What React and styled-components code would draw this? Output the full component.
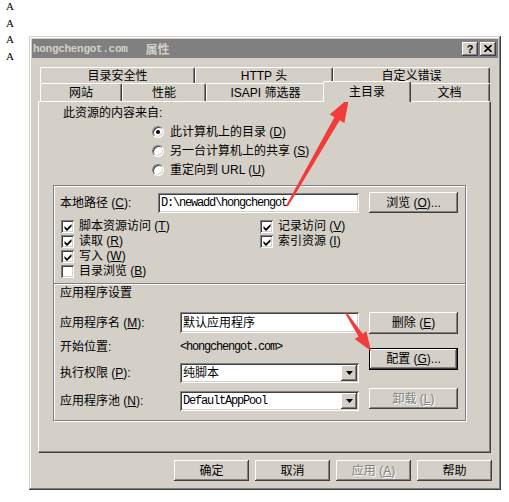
import React from 'react'
import styled, { createGlobalStyle } from 'styled-components'

const FACE = '#d4d0c8'
const raised = `box-shadow: inset -1px -1px #404040, inset 1px 1px #fff, inset -2px -2px #808080, inset 2px 2px ${FACE};`
const sunken = `box-shadow: inset 1px 1px #808080, inset -1px -1px #fff, inset 2px 2px #404040, inset -2px -2px ${FACE};`

const GlobalStyle = createGlobalStyle`
  html, body { margin: 0; padding: 0; background: #fff; }
  body {
    font-family: "Liberation Sans", "Noto Sans CJK SC", sans-serif;
    font-size: 12px;
    line-height: 16px;
    color: #000;
  }
  u { text-decoration: underline; text-underline-offset: 1px; }
`

// tail/tip arrow polygon, like the red markup arrows in the shot
function arrowPoints([x1, y1], [x2, y2], tw, nw, hl, hw) {
    const dx = x2 - x1, dy = y2 - y1
    const len = Math.hypot(dx, dy)
    const ux = dx / len, uy = dy / len
    const nx = -uy, ny = ux
    const bx = x2 - ux * hl, by = y2 - uy * hl
    const p = (x, y, k) => [x + nx * k, y + ny * k]
    const pts = [
        p(x1, y1, tw / 2), p(bx, by, nw / 2), p(bx, by, hw / 2), [x2, y2],
        p(bx, by, -hw / 2), p(bx, by, -nw / 2), p(x1, y1, -tw / 2),
    ]
    return pts.map(q => q.map(v => v.toFixed(1)).join(',')).join(' ')
}

const Check = () => (
    <svg width="8" height="8" viewBox="0 0 8 8">
        <path d="M0.5 3 L3 5.5 L7.5 1 L7.5 3.5 L3 8 L0.5 5.5Z" fill="#000" />
    </svg>
)

const DownArrow = () => (
    <svg width="7" height="4" viewBox="0 0 7 4">
        <polygon points="0,0 7,0 3.5,4" fill="#000" />
    </svg>
)

// mnemonic "(X)" kept in a latin face so the parens stay tight
const Key = ({ k }) => <KeyText>(<u>{k}</u>)</KeyText>

function App() {
    return (
        <Page>
            <GlobalStyle />
            <Letters>
                <div>A</div>
                <div>A</div>
                <div>A</div>
                <div>A</div>
            </Letters>
            <Window>
                <TitleBar>
                    <TitleText>
                        <TitleLatin>hongchengot.com</TitleLatin>
                        <TitleCjk>属性</TitleCjk>
                    </TitleText>
                    <CaptionButtons>
                        <CaptionButton>?</CaptionButton>
                        <CaptionButton>
                            <svg width="8" height="7" viewBox="0 0 8 7">
                                <path d="M0.5 0 L7.5 7 M7.5 0 L0.5 7" stroke="#000" strokeWidth="1.6" />
                            </svg>
                        </CaptionButton>
                    </CaptionButtons>
                </TitleBar>

                <Body>
                    <Tabs>
                        <TabRow $h={16}>
                            <Tab $w={155}>目录安全性</Tab>
                            <Tab $w={138}>HTTP 头</Tab>
                            <Tab $w={157}>自定义错误</Tab>
                        </TabRow>
                        <TabRow $h={18}>
                            <Tab $w={82}>网站</Tab>
                            <Tab $w={84}>性能</Tab>
                            <Tab $w={119}>ISAPI 筛选器</Tab>
                            <Tab $w={84} $active>主目录</Tab>
                            <Tab $w={81}>文档</Tab>
                        </TabRow>
                    </Tabs>

                    <Panel>
                        <SourceLabel>此资源的内容来自:</SourceLabel>
                        <RadioList>
                            <RadioRow><Radio $on /><span>此计算机上的目录 <Key k="D" /></span></RadioRow>
                            <RadioRow><Radio /><span>另一台计算机上的共享 <Key k="S" /></span></RadioRow>
                            <RadioRow><Radio /><span>重定向到 URL <Key k="U" /></span></RadioRow>
                        </RadioList>

                        <GroupBox>
                            <PathSection>
                                <PathRow>
                                    <Label $w={98}>本地路径 <Key k="C" />:</Label>
                                    <TextField $w={201} $h={20} $mono>D:\newadd\hongchengot</TextField>
                                    <Button $w={89} $h={21} $ml={10}><span>浏览 <Key k="O" />...</span></Button>
                                </PathRow>
                                <CheckColumns>
                                    <CheckColumn $w={199}>
                                        <CheckRow><CheckBox><Check /></CheckBox><span>脚本资源访问 <Key k="T" /></span></CheckRow>
                                        <CheckRow><CheckBox><Check /></CheckBox><span>读取 <Key k="R" /></span></CheckRow>
                                        <CheckRow><CheckBox><Check /></CheckBox><span>写入 <Key k="W" /></span></CheckRow>
                                        <CheckRow><CheckBox /><span>目录浏览 <Key k="B" /></span></CheckRow>
                                    </CheckColumn>
                                    <CheckColumn>
                                        <CheckRow><CheckBox><Check /></CheckBox><span>记录访问 <Key k="V" /></span></CheckRow>
                                        <CheckRow><CheckBox><Check /></CheckBox><span>索引资源 <Key k="I" /></span></CheckRow>
                                    </CheckColumn>
                                </CheckColumns>
                            </PathSection>
                            <Divider />
                            <AppSection>
                                <SectionTitle>应用程序设置</SectionTitle>
                                <AppGrid>
                                    <AppFields>
                                        <FieldRow $h={21}>
                                            <Label $w={120}>应用程序名 <Key k="M" />:</Label>
                                            <TextField $w={179} $h={21}>默认应用程序</TextField>
                                        </FieldRow>
                                        <FieldRow $h={16} $mt={6}>
                                            <Label $w={120}>开始位置:</Label>
                                            <Mono>&lt;hongchengot.com&gt;</Mono>
                                        </FieldRow>
                                        <FieldRow $h={20} $mt={8}>
                                            <Label $w={120}>执行权限 <Key k="P" />:</Label>
                                            <Select>
                                                <SelectValue>纯脚本</SelectValue>
                                                <DropButton><DownArrow /></DropButton>
                                            </Select>
                                        </FieldRow>
                                        <FieldRow $h={20} $mt={8}>
                                            <Label $w={120}>应用程序池 <Key k="N" />:</Label>
                                            <Select>
                                                <SelectValue $mono>DefaultAppPool</SelectValue>
                                                <DropButton><DownArrow /></DropButton>
                                            </Select>
                                        </FieldRow>
                                    </AppFields>
                                    <AppButtons>
                                        <Button $w={89} $h={22}><span>删除 <Key k="E" /></span></Button>
                                        <Button $w={89} $h={22} $mt={14} $default><span>配置 <Key k="G" />...</span></Button>
                                        <Button $w={89} $h={21} $mt={18} $disabled><span>卸载 <Key k="L" /></span></Button>
                                    </AppButtons>
                                </AppGrid>
                            </AppSection>
                        </GroupBox>
                    </Panel>

                    <ButtonBar>
                        <Button $w={75} $h={21}>确定</Button>
                        <Button $w={75} $h={21}>取消</Button>
                        <Button $w={75} $h={21} $disabled><span>应用 <Key k="A" /></span></Button>
                        <Button $w={75} $h={21}>帮助</Button>
                    </ButtonBar>
                </Body>
            </Window>

            <Overlay width="509" height="502" viewBox="0 0 509 502">
                <polygon points={arrowPoints([287, 206], [349, 98], 2, 6, 24, 17)} fill="#f23b3b" />
                <polygon points={arrowPoints([346, 313], [371, 351], 2, 5, 19, 14)} fill="#f23b3b" />
            </Overlay>
        </Page>
    )
}

export default App

const Page = styled.div`
    position: relative;
    width: 509px;
    height: 502px;
    display: flex;
    align-items: flex-start;
    overflow: hidden;
`

const Letters = styled.div`
    width: 29px;
    box-sizing: border-box;
    padding-left: 6px;
    margin-top: -2px;
    font-family: "Liberation Serif", serif;
    font-size: 11px;
    line-height: 16.7px;
`

const Window = styled.div`
    margin-top: 36px;
    width: 472px;
    height: 454px;
    box-sizing: border-box;
    padding: 3px;
    background: ${FACE};
    box-shadow: inset -1px -1px #404040, inset 1px 1px ${FACE}, inset -2px -2px #808080, inset 2px 2px #fff;
    display: flex;
    flex-direction: column;
`

const TitleBar = styled.div`
    height: 19px;
    background: #808080;
    display: flex;
    align-items: center;
    padding: 0 2px 0 1px;
    color: ${FACE};
    font-weight: 700;
`

const TitleText = styled.div`
    flex: 1;
    display: flex;
    align-items: center;
`

const TitleLatin = styled.span`
    font-family: "Liberation Mono", monospace;
    font-size: 11px;
    letter-spacing: -0.3px;
`

const TitleCjk = styled.span`
    margin-left: 18px;
    font-size: 12px;
    font-family: "Noto Sans CJK SC", sans-serif;
`

const CaptionButtons = styled.div`
    display: flex;
    gap: 2px;
`

const CaptionButton = styled.div`
    width: 16px;
    height: 14px;
    box-sizing: border-box;
    background: ${FACE};
    ${raised}
    display: flex;
    align-items: center;
    justify-content: center;
    color: #000;
    font-family: "Liberation Sans", sans-serif;
    font-size: 11px;
    font-weight: 700;
`

const KeyText = styled.span`
    font-family: "Liberation Sans", sans-serif;
`

const Body = styled.div`
    flex: 1;
    padding: 9px 7px 0 6px;
    display: flex;
    flex-direction: column;
`

const Tabs = styled.div`
    margin-left: 2px;
`

const TabRow = styled.div`
    display: flex;
    align-items: flex-end;
    height: ${p => p.$h}px;
`

const Tab = styled.div`
    width: ${p => (p.$active ? p.$w + 4 : p.$w)}px;
    height: ${p => (p.$active ? '21px' : '100%')};
    margin: ${p => (p.$active ? '0 -2px -1px' : '0')};
    position: ${p => (p.$active ? 'relative' : 'static')};
    z-index: ${p => (p.$active ? 1 : 'auto')};
    box-sizing: border-box;
    background: ${FACE};
    border-top: 1px solid #fff;
    border-left: 1px solid #fff;
    border-right: 1px solid #404040;
    border-top-left-radius: 2px;
    border-top-right-radius: 2px;
    box-shadow: inset -1px 0 #808080;
    display: flex;
    align-items: center;
    justify-content: center;
    padding-top: ${p => (p.$active ? 0 : 1)}px;
    white-space: nowrap;
`

const Panel = styled.div`
    height: 352px;
    box-sizing: border-box;
    background: ${FACE};
    border-top: 1px solid #fff;
    border-left: 1px solid #fff;
    border-right: 1px solid #404040;
    border-bottom: 1px solid #404040;
    box-shadow: inset -1px -1px #808080;
    padding: 3px 0 0 14px;
`

const SourceLabel = styled.div`
    margin-left: 10px;
    height: 16px;
`

const RadioList = styled.div`
    margin: 1px 0 0 99px;
`

const RadioRow = styled.div`
    height: 19px;
    display: flex;
    align-items: center;
    gap: 6px;
    white-space: nowrap;
`

const Radio = styled.span`
    width: 12px;
    height: 12px;
    box-sizing: border-box;
    border-radius: 50%;
    background: #fff;
    border: 1px solid;
    border-color: #808080 #fff #fff #808080;
    box-shadow: inset 1px 1px #404040, inset -1px -1px ${FACE};
    display: flex;
    align-items: center;
    justify-content: center;

    &::after {
        content: '';
        width: 4px;
        height: 4px;
        border-radius: 50%;
        background: ${p => (p.$on ? '#000' : 'transparent')};
    }
`

const GroupBox = styled.div`
    margin-top: 6px;
    width: 413px;
    height: 236px;
    box-sizing: border-box;
    border: 1px solid #808080;
    box-shadow: inset 1px 1px #fff, 1px 1px #fff;
    display: flex;
    flex-direction: column;
`

const PathSection = styled.div`
    height: 97px;
    box-sizing: border-box;
    padding: 6px 0 0 6px;
`

const PathRow = styled.div`
    display: flex;
    align-items: center;
    height: 21px;
`

const Label = styled.div`
    width: ${p => p.$w}px;
    flex-shrink: 0;
    white-space: nowrap;
`

const TextField = styled.div`
    width: ${p => p.$w}px;
    height: ${p => p.$h}px;
    box-sizing: border-box;
    background: #fff;
    ${sunken}
    display: flex;
    align-items: center;
    padding: 0 3px;
    flex-shrink: 0;
    white-space: nowrap;
    overflow: hidden;
    ${p => (p.$mono ? 'font-family: "Liberation Mono", monospace; letter-spacing: -1.2px;' : '')}
`

const Mono = styled.span`
    font-family: "Liberation Mono", monospace;
    letter-spacing: -1.2px;
    white-space: nowrap;
`

const Button = styled.div`
    width: ${p => p.$w}px;
    height: ${p => p.$h}px;
    margin-top: ${p => p.$mt || 0}px;
    margin-left: ${p => p.$ml || 0}px;
    box-sizing: border-box;
    flex-shrink: 0;
    background: ${FACE};
    ${p => (p.$default ? 'border: 1px solid #000;' : '')}
    ${raised}
    display: flex;
    align-items: center;
    justify-content: center;
    white-space: nowrap;
    color: ${p => (p.$disabled ? '#808080' : '#000')};
    text-shadow: ${p => (p.$disabled ? '1px 1px #fff' : 'none')};
`

const CheckColumns = styled.div`
    display: flex;
    margin: 6px 0 0 1px;
`

const CheckColumn = styled.div`
    width: ${p => (p.$w ? `${p.$w}px` : 'auto')};
    display: flex;
    flex-direction: column;
`

const CheckRow = styled.div`
    height: 15px;
    line-height: 15px;
    display: flex;
    align-items: center;
    gap: 5px;
    white-space: nowrap;
`

const CheckBox = styled.span`
    width: 13px;
    height: 13px;
    box-sizing: border-box;
    background: #fff;
    ${sunken}
    display: flex;
    align-items: center;
    justify-content: center;
    flex-shrink: 0;
`

const Divider = styled.div`
    height: 0;
    border-top: 1px solid #808080;
    border-bottom: 1px solid #fff;
`

const AppSection = styled.div`
    padding: 0 0 0 6px;
`

const SectionTitle = styled.div`
    height: 16px;
`

const AppGrid = styled.div`
    display: flex;
    margin-top: 11px;
`

const AppFields = styled.div`
    width: 299px;
    display: flex;
    flex-direction: column;
`

const FieldRow = styled.div`
    display: flex;
    align-items: center;
    height: ${p => p.$h}px;
    margin-top: ${p => p.$mt || 0}px;
`

const Select = styled.div`
    width: 179px;
    height: 20px;
    box-sizing: border-box;
    background: #fff;
    ${sunken}
    display: flex;
    align-items: center;
    padding: 2px;
`

const SelectValue = styled.div`
    flex: 1;
    padding-left: 1px;
    white-space: nowrap;
    ${p => (p.$mono ? 'font-family: "Liberation Mono", monospace; letter-spacing: -1.2px;' : '')}
`

const DropButton = styled.div`
    width: 16px;
    height: 16px;
    box-sizing: border-box;
    background: ${FACE};
    ${raised}
    display: flex;
    align-items: center;
    justify-content: center;
`

const AppButtons = styled.div`
    margin-left: 10px;
    display: flex;
    flex-direction: column;
`

const ButtonBar = styled.div`
    display: flex;
    justify-content: flex-end;
    gap: 6px;
    margin: 7px -1px 0 0;
`

const Overlay = styled.svg`
    position: absolute;
    left: 0;
    top: 0;
    pointer-events: none;
`
